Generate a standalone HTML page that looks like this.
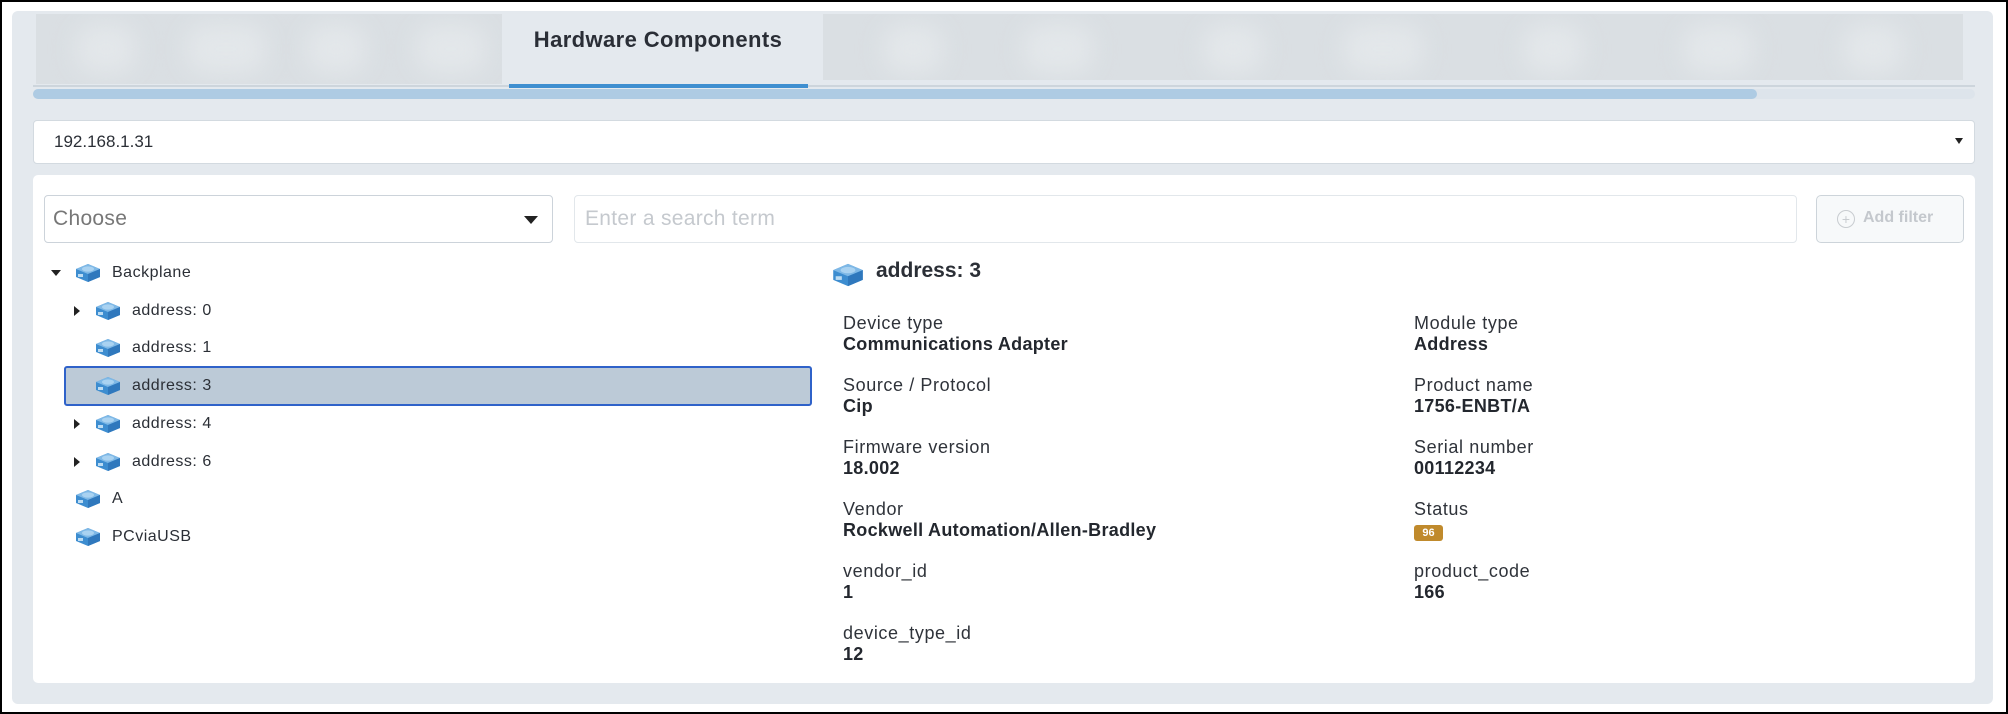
<!DOCTYPE html>
<html><head><meta charset="utf-8"><style>
*{box-sizing:border-box;margin:0;padding:0}
body{width:2008px;height:714px;background:#fff;font-family:"Liberation Sans",sans-serif;color:#2b2f36;position:relative;overflow:hidden}
.frame{position:absolute;left:0;top:0;width:2008px;height:714px;border:2px solid #000}
.panel{position:absolute;left:12px;top:11px;width:1981px;height:693px;background:#e4e9ee;border-radius:6px}
.blur{position:absolute;background:#dadfe3;overflow:hidden}
.blur i{position:absolute;top:10px;height:50px;background:#e3e7ea;filter:blur(12px);border-radius:20px}
.abs{position:absolute}
.icon{position:absolute;width:26px;height:20px}
.row{position:absolute;font-size:16px;height:20px;line-height:20px;letter-spacing:0.5px}
.lbl{position:absolute;font-size:18px;color:#2f333a;letter-spacing:0.6px}
.val{position:absolute;font-size:18px;font-weight:bold;color:#23272e;letter-spacing:0.3px}
</style></head><body>
<div class="panel"></div>
<div class="blur" style="left:36px;top:14px;width:466px;height:70px"><i style="left:40px;width:60px"></i><i style="left:150px;width:80px"></i><i style="left:270px;width:60px"></i><i style="left:380px;width:70px"></i></div>
<div class="blur" style="left:823px;top:14px;width:1140px;height:66px"><i style="left:60px;width:60px"></i><i style="left:200px;width:70px"></i><i style="left:380px;width:60px"></i><i style="left:520px;width:80px"></i><i style="left:700px;width:60px"></i><i style="left:860px;width:70px"></i><i style="left:1020px;width:60px"></i></div>
<div class="abs" style="left:498px;top:27px;width:320px;text-align:center;font-size:22px;font-weight:bold;color:#2a2e36;letter-spacing:0.4px">Hardware Components</div>
<div class="abs" style="left:33px;top:85px;width:1942px;height:2px;background:#cdd5dc"></div>
<div class="abs" style="left:509px;top:84px;width:299px;height:4px;background:#3f8fd0"></div>
<div class="abs" style="left:33px;top:89px;width:1942px;height:10px;background:#dde4eb;border-radius:5px"></div>
<div class="abs" style="left:33px;top:89px;width:1724px;height:10px;background:#aecbe3;border-radius:5px"></div>

<div class="abs" style="left:33px;top:120px;width:1942px;height:44px;background:#fff;border:1px solid #d3dae0;border-radius:4px"></div>
<div class="abs" style="left:54px;top:132px;font-size:17px">192.168.1.31</div>
<div class="abs" style="left:1955px;top:138px;width:0;height:0;border-left:4px solid transparent;border-right:4px solid transparent;border-top:6px solid #222"></div>

<div class="abs" style="left:33px;top:175px;width:1942px;height:508px;background:#fff;border-radius:5px"></div>
<div class="abs" style="left:44px;top:195px;width:509px;height:48px;border:1px solid #ccd3da;border-radius:4px"></div>
<div class="abs" style="left:53px;top:207px;font-size:21px;color:#777;letter-spacing:0.3px">Choose</div>
<div class="abs" style="left:524px;top:216px;width:0;height:0;border-left:7px solid transparent;border-right:7px solid transparent;border-top:8px solid #222"></div>
<div class="abs" style="left:574px;top:195px;width:1223px;height:48px;border:1px solid #e2e7eb;border-radius:4px"></div>
<div class="abs" style="left:585px;top:207px;font-size:21px;color:#c5c9ce;letter-spacing:0.3px">Enter a search term</div>
<div class="abs" style="left:1816px;top:195px;width:148px;height:48px;border:1px solid #cdd4da;border-radius:5px;background:#f7f9fa"></div>
<div class="abs" style="left:1837px;top:210px;width:18px;height:18px;border:1px solid #c8ccd0;border-radius:50%;color:#c8ccd0;font-size:14px;line-height:16px;text-align:center">+</div>
<div class="abs" style="left:1863px;top:209px;font-size:16px;font-weight:bold;color:#c4c8cd">Add filter</div>

<svg width="0" height="0" style="position:absolute"><defs><g id="ic"><path d="M13 1 L25 6 L25 14 L13 19 L1 14 L1 6 Z" fill="#3d8dd0"/><path d="M13 1 L25 6 L13 11 L1 6 Z" fill="#7eb8e6"/><path d="M13 11 L25 6 L25 14 L13 19 Z" fill="#2f78bd"/><ellipse cx="13" cy="6" rx="6" ry="2.6" fill="#a9d2f1"/><rect x="3" y="11" width="5" height="3" fill="#bcdcf3"/></g></defs></svg>

<div class="abs" style="left:64px;top:366px;width:748px;height:40px;background:#bccad7;border:2px solid #2f62c9;border-radius:3px"></div>
<div class="abs" style="left:51px;top:270px;border-left:5px solid transparent;border-right:5px solid transparent;border-top:6px solid #222"></div>
<svg class="icon" style="left:75px;top:263px"><use href="#ic"/></svg><div class="row" style="left:112px;top:263px">Backplane</div>
<div class="abs" style="left:74px;top:306px;border-top:5px solid transparent;border-bottom:5px solid transparent;border-left:6px solid #222"></div>
<svg class="icon" style="left:95px;top:301px"><use href="#ic"/></svg><div class="row" style="left:132px;top:301px">address: 0</div>
<svg class="icon" style="left:95px;top:338px"><use href="#ic"/></svg><div class="row" style="left:132px;top:338px">address: 1</div>
<svg class="icon" style="left:95px;top:376px"><use href="#ic"/></svg><div class="row" style="left:132px;top:376px">address: 3</div>
<div class="abs" style="left:74px;top:419px;border-top:5px solid transparent;border-bottom:5px solid transparent;border-left:6px solid #222"></div>
<svg class="icon" style="left:95px;top:414px"><use href="#ic"/></svg><div class="row" style="left:132px;top:414px">address: 4</div>
<div class="abs" style="left:74px;top:457px;border-top:5px solid transparent;border-bottom:5px solid transparent;border-left:6px solid #222"></div>
<svg class="icon" style="left:95px;top:452px"><use href="#ic"/></svg><div class="row" style="left:132px;top:452px">address: 6</div>
<svg class="icon" style="left:75px;top:489px"><use href="#ic"/></svg><div class="row" style="left:112px;top:489px">A</div>
<svg class="icon" style="left:75px;top:527px"><use href="#ic"/></svg><div class="row" style="left:112px;top:527px">PCviaUSB</div>

<svg class="icon" style="left:832px;top:261px;width:32px;height:28px" viewBox="0 0 26 20"><use href="#ic"/></svg>
<div class="abs" style="left:876px;top:259px;font-size:21px;font-weight:bold">address: 3</div>

<div class="lbl" style="left:843px;top:313px">Device type</div><div class="val" style="left:843px;top:334px">Communications Adapter</div>
<div class="lbl" style="left:843px;top:375px">Source / Protocol</div><div class="val" style="left:843px;top:396px">Cip</div>
<div class="lbl" style="left:843px;top:437px">Firmware version</div><div class="val" style="left:843px;top:458px">18.002</div>
<div class="lbl" style="left:843px;top:499px">Vendor</div><div class="val" style="left:843px;top:520px">Rockwell Automation/Allen-Bradley</div>
<div class="lbl" style="left:843px;top:561px">vendor_id</div><div class="val" style="left:843px;top:582px">1</div>
<div class="lbl" style="left:843px;top:623px">device_type_id</div><div class="val" style="left:843px;top:644px">12</div>

<div class="lbl" style="left:1414px;top:313px">Module type</div><div class="val" style="left:1414px;top:334px">Address</div>
<div class="lbl" style="left:1414px;top:375px">Product name</div><div class="val" style="left:1414px;top:396px">1756-ENBT/A</div>
<div class="lbl" style="left:1414px;top:437px">Serial number</div><div class="val" style="left:1414px;top:458px">00112234</div>
<div class="lbl" style="left:1414px;top:499px">Status</div>
<div class="abs" style="left:1414px;top:525px;width:29px;height:16px;background:#c08a2c;border-radius:3px;color:#fff;font-size:11px;font-weight:bold;text-align:center;line-height:16px">96</div>
<div class="lbl" style="left:1414px;top:561px">product_code</div><div class="val" style="left:1414px;top:582px">166</div>

<div class="frame"></div>
</body></html>
